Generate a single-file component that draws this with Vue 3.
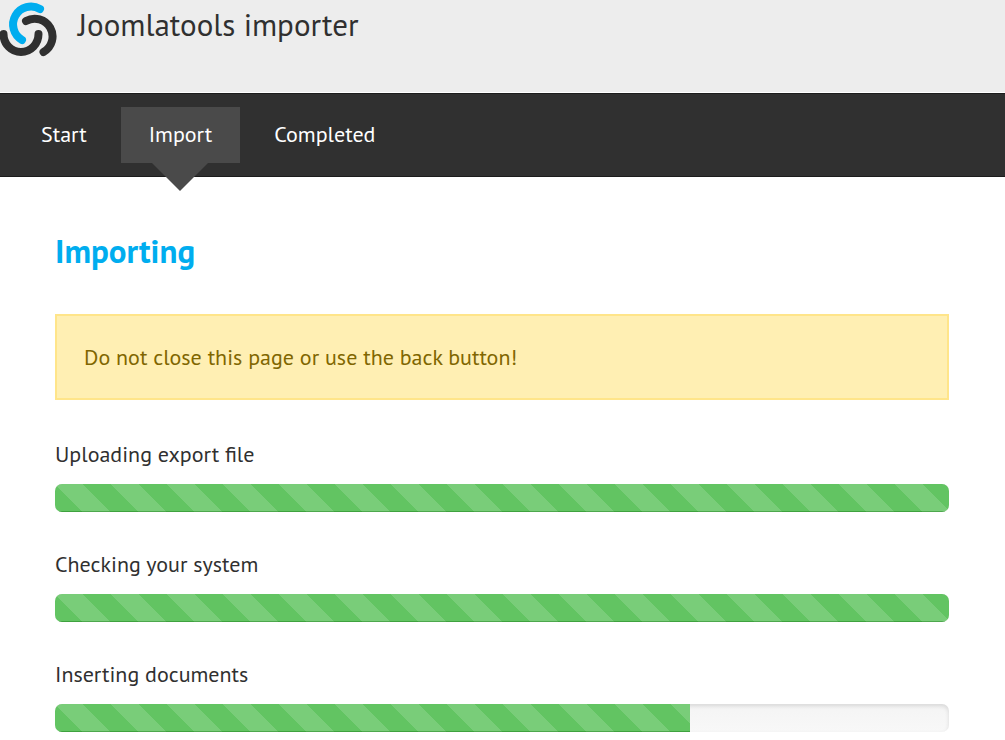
<script setup>
const steps = [
  { label: 'Start', active: false },
  { label: 'Import', active: true },
  { label: 'Completed', active: false },
]

const tasks = [
  { id: 'upload', label: 'Uploading export file', percent: 100 },
  { id: 'check', label: 'Checking your system', percent: 100 },
  { id: 'insert', label: 'Inserting documents', percent: 71 },
]
</script>

<template>
  <div class="page">
    <header class="header">
      <svg class="logo" viewBox="0 0 58 60" fill="none" stroke-width="8" stroke-linecap="round" aria-hidden="true">
        <path d="M40 9A17 17 0 0 0 22 40" stroke="#00adef" />
        <path d="M26 21A17 17 0 0 1 43.5 52" stroke="#303030" />
        <path d="M3.5 34A17.5 18 0 0 0 38.5 34" stroke="#303030" />
      </svg>
      <h1 class="title">Joomlatools importer</h1>
    </header>

    <nav class="steps">
      <a
        v-for="step in steps"
        :key="step.label"
        href="#"
        class="step"
        :class="{ active: step.active }"
        :aria-current="step.active ? 'step' : undefined"
      >{{ step.label }}</a>
    </nav>

    <main class="content">
      <h2 class="heading">Importing</h2>
      <p class="alert">Do not close this page or use the back button!</p>
      <section v-for="task in tasks" :key="task.id" class="task">
        <h3 :id="task.id" class="task-label">{{ task.label }}</h3>
        <div
          class="progress"
          role="progressbar"
          :aria-labelledby="task.id"
          aria-valuemin="0"
          aria-valuemax="100"
          :aria-valuenow="task.percent"
        >
          <div class="bar" :style="{ width: task.percent + '%' }"></div>
        </div>
      </section>
    </main>
  </div>
</template>

<style>
body {
  margin: 0;
  background: #fff;
}
</style>

<style scoped>
.page {
  font-family: "PT Sans", "Noto Sans", sans-serif;
  font-size: 22px;
  line-height: 28px;
  color: #303030;
}

.header {
  display: flex;
  align-items: flex-start;
  box-sizing: border-box;
  height: 93px;
  gap: 20px;
  background: #ededed;
  border-bottom: 1px solid #fff;
}

.logo {
  flex: none;
  width: 58px;
  height: 60px;
}

.title {
  margin: 5px 0 0;
  font-size: 31px;
  line-height: 40px;
  font-weight: 400;
}

.steps {
  display: flex;
  gap: 6px;
  padding: 13px;
  background: #303030;
  border-top: 1px solid #1c1c1c;
  border-bottom: 1px solid #1c1c1c;
}

.step {
  position: relative;
  padding: 13px 28px 15px;
  color: #fff;
  text-decoration: none;
}

.step.active {
  background: #4a4a4a;
}

.step.active::after {
  content: "";
  position: absolute;
  top: 100%;
  left: 50%;
  margin-left: -28px;
  border: 28px solid transparent;
  border-top-color: #4a4a4a;
  border-bottom: 0;
}

.content {
  padding: 52px 56px 8px 55px;
}

.heading {
  margin: 0 0 41px;
  font-size: 33px;
  line-height: 44px;
  font-weight: 600;
  color: #00adef;
}

.alert {
  margin: 0 0 40px;
  padding: 27px;
  border: 2px solid #ffe58a;
  background: #ffefb3;
  color: #806600;
}

.task {
  margin-bottom: 38px;
}

.task:last-child {
  margin-bottom: 0;
}

.task-label {
  margin: 0 0 16px;
  font-size: 22px;
  line-height: 28px;
  font-weight: 400;
}

.progress {
  height: 28px;
  overflow: hidden;
  border-radius: 7px;
  background: linear-gradient(#f4f4f4, #f8f8f8);
  box-shadow: inset 0 2px 4px rgba(0, 0, 0, 0.12);
}

.bar {
  height: 100%;
  background-color: #62c462;
  background-image: linear-gradient(
    45deg,
    rgba(255, 255, 255, 0.15) 25%,
    transparent 25%,
    transparent 50%,
    rgba(255, 255, 255, 0.15) 50%,
    rgba(255, 255, 255, 0.15) 75%,
    transparent 75%
  );
  background-size: 56px 56px;
  box-shadow: inset 0 -1px 0 rgba(0, 100, 0, 0.35);
}
</style>
